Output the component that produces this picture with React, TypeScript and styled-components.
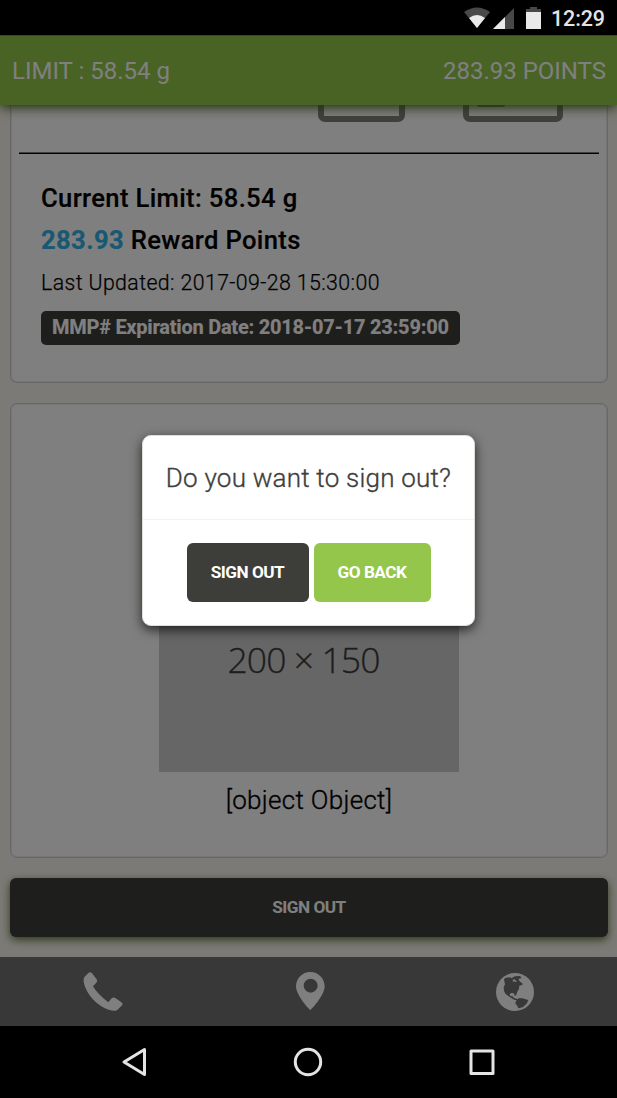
import React from "react";
import styled, { createGlobalStyle } from "styled-components";

const Global = createGlobalStyle`
  * { box-sizing: border-box; }
  body { margin: 0; background: #000; font-family: Roboto, "Liberation Sans", sans-serif; }
`;

const Phone = styled.div`
  display: flex;
  flex-direction: column;
  width: 617px;
  height: 1098px;
  overflow: hidden;
  background: #000;
`;

const StatusBar = styled.div`
  position: relative;
  z-index: 3;
  flex: none;
  height: 35px;
  display: flex;
  align-items: center;
  justify-content: flex-end;
  padding: 1px 12px 0 0;
  background: #000;
  color: #e4e4e4;
`;

const Clock = styled.span`
  margin-left: 10px;
  padding-top: 2px;
  font-size: 21.5px;
  font-weight: 500;
  letter-spacing: -0.1px;
  line-height: 30px;
`;

const Screen = styled.div`
  position: relative;
  flex: none;
  height: 991px;
  display: flex;
  flex-direction: column;
  background: #f7f4ec;
`;

const Header = styled.header`
  position: relative;
  z-index: 1;
  flex: none;
  height: 70px;
  padding: 0 11px 0 12px;
  display: flex;
  align-items: center;
  justify-content: space-between;
  background: #92c64a;
  border-top: 1px solid #6f9440;
  box-shadow: 0 3px 11px #4b6526;
  color: #fff;
  font-size: 24px;
  line-height: 30px;
`;

const Content = styled.main`
  flex: 1;
  min-height: 0;
  padding: 0 9px 0 10px;
  display: flex;
  flex-direction: column;
`;

const Card = styled.section<{ $height: number; $first?: boolean }>`
  flex: none;
  height: ${(p) => p.$height}px;
  margin-bottom: 20px;
  padding: 0 1px;
  background: #fff;
  border: 1px solid #cfcfcf;
  border-top-width: ${(p) => (p.$first ? 0 : 1)}px;
  border-radius: ${(p) => (p.$first ? "0 0 7px 7px" : "7px")};
  box-shadow: inset 0 0 0 1px #ececec;
`;

const BoxRow = styled.div`
  height: 47px;
  padding: 0 43px 0 0;
  display: flex;
  justify-content: flex-end;
  align-items: flex-start;
  gap: 58px;
`;

const Box = styled.div<{ $width: number }>`
  width: ${(p) => p.$width}px;
  height: 17px;
  border: 6px solid #80807c;
  border-top: 0;
  border-radius: 0 0 7px 7px;
`;

const BoxMark = styled.div`
  width: 28px;
  height: 2px;
  margin-left: 8px;
  background: #80807c;
  border-radius: 0 0 3px 3px;
`;

const Rule = styled.hr`
  height: 2px;
  margin: 0 7px;
  border: 0;
  border-top: 1px solid #808080;
  background: #000;
`;

const Details = styled.div`
  padding: 23px 29px 0;
  color: #000;
`;

const Strong = styled.div`
  font-size: 25.6px;
  font-weight: 500;
  letter-spacing: 0.36px;
  line-height: 42px;
  -webkit-text-stroke: 0.2px currentColor;
`;

const Points = styled.span`
  color: #33b0e4;
  font-weight: 700;
`;

const Updated = styled.div`
  padding-top: 1px;
  font-size: 21.3px;
  font-weight: 300;
  letter-spacing: 0.4px;
  line-height: 42px;
  -webkit-text-stroke: 0.25px currentColor;
`;

const Badge = styled.div`
  display: inline-block;
  height: 34px;
  margin-top: 7px;
  padding: 0 11px;
  border-radius: 5px;
  background: #3d3d3a;
  color: #fff;
  font-size: 20px;
  font-weight: 800;
  letter-spacing: -0.26px;
  line-height: 33px;
`;

const ImageCard = styled.div`
  padding-top: 143px;
  display: flex;
  flex-direction: column;
  align-items: center;
`;

const Placeholder = styled.div`
  width: 300px;
  height: 225px;
  padding: 0 11px 1px 0;
  display: flex;
  align-items: center;
  justify-content: center;
  background: #ccc;
  color: #3b3b3b;
  font-family: "Open Sans", "Noto Sans", sans-serif;
  font-weight: 300;
  font-size: 35.5px;
  letter-spacing: -0.9px;
  -webkit-text-stroke: 0.3px currentColor;
`;

const Caption = styled.div`
  margin-top: 8px;
  font-size: 26px;
  font-weight: 300;
  letter-spacing: 0.3px;
  line-height: 40px;
  color: #000;
  -webkit-text-stroke: 0.35px currentColor;
`;

const Button = styled.button<{ $tone: "dark" | "green"; $width: number; $raised?: boolean }>`
  flex: none;
  width: ${(p) => p.$width}px;
  height: 59px;
  padding: 0 0 2px;
  border: 0;
  border-radius: 6px;
  background: ${(p) => (p.$tone === "dark" ? "#3d3d39" : "#94c64c")};
  box-shadow: ${(p) => (p.$raised ? "0 3px 9px #5d7338" : "none")};
  color: #fff;
  font-family: inherit;
  font-size: 17.2px;
  font-weight: 700;
  letter-spacing: -0.5px;
`;

const TabBar = styled.nav`
  flex: none;
  height: 69px;
  display: grid;
  grid-template-columns: 206px 208px 202px;
  place-items: center;
  background: #707070;
  color: #fff;
`;

const Scrim = styled.div`
  position: absolute;
  inset: 0;
  z-index: 2;
  display: flex;
  align-items: center;
  justify-content: center;
  background: rgba(0, 0, 0, 0.5);
`;

const Dialog = styled.div`
  width: 333px;
  height: 191px;
  border: 1px solid #e0ddd8;
  border-radius: 9px;
  background: #fff;
  box-shadow: 0 4px 12px rgba(0, 0, 0, 0.7);
`;

const Question = styled.div`
  height: 84px;
  border-bottom: 1px solid #f2f3ec;
  color: #3e3e3c;
  font-size: 26px;
  font-weight: 300;
  letter-spacing: 0.22px;
  line-height: 84px;
  text-align: center;
  -webkit-text-stroke: 0.35px currentColor;
`;

const Actions = styled.div`
  padding: 23px 0 0 0;
  display: flex;
  justify-content: center;
  gap: 5px;
`;

const NavBar = styled.div`
  flex: none;
  height: 72px;
  display: grid;
  grid-template-columns: 221px 174px 174px;
  align-items: center;
`;

const NavKey = styled.div`
  display: flex;
  justify-content: flex-end;
`;

const WifiIcon = () => (
  <svg width="28" height="22" viewBox="0 0 28 22">
    <path d="M1 5Q14-4 27 5L14 21Z" fill="#484848" />
    <path d="M6 11Q14 5 22 11L14 21Z" fill="#e9e9e9" />
  </svg>
);

const SignalSvg = styled.svg`
  margin-left: 2px;
`;

const BatterySvg = styled.svg`
  margin-left: 12px;
`;

const SignalIcon = () => (
  <SignalSvg width="21" height="21" viewBox="0 0 21 21">
    <path d="M0 21L21 0V21Z" fill="#484848" />
    <path d="M0 21L12 9V21Z" fill="#e9e9e9" />
  </SignalSvg>
);

const BatteryIcon = () => (
  <BatterySvg width="15" height="22" viewBox="0 0 15 22">
    <path d="M4 0H11V2H15V6H0V2H4Z" fill="#484848" />
    <path d="M0 5H15V22H0Z" fill="#e9e9e9" />
  </BatterySvg>
);

const CallIcon = () => (
  <svg width="40" height="40" viewBox="0 0 120 120" fill="currentColor">
    <path d="M17 2Q23-2 27 4L41 22Q44 27 40 32L30 43Q43 66 76 91L86 79Q91 74 97 78L115 91Q121 95 117 100L103 114Q100 117 92 116C40 109 6 57 2 29Q1 19 5 14Z" />
  </svg>
);

const PinIcon = () => (
  <svg width="29" height="39" viewBox="0 0 87 117" fill="currentColor">
    <path
      fillRule="evenodd"
      d="M43 0C67 0 86 19 86 43C86 72 43 115 43 115S0 72 0 43C0 19 19 0 43 0ZM44 20A21 21 0 1 0 44 62A21 21 0 1 0 44 20Z"
    />
  </svg>
);

const GlobeIcon = () => (
  <svg width="38" height="38" viewBox="0 0 114 114">
    <circle cx="57" cy="57" r="57" fill="currentColor" />
    <path
      fill="#707070"
      d="M24 20L27 15L40 13L47 15L57 10L72 9L77 15L67 18L71 25L81 33L76 37L70 38L69 48L63 58L61 66L56 69L54 61L45 60L41 64L43 69L50 70L54 75L63 78L65 81L56 81L47 76L37 69L28 62L24 54L23 43L27 34Z"
    />
    <path fill="currentColor" d="M50 20L56 19L62 25L60 28L56 25L51 27Z" />
    <path fill="#707070" d="M60 83L67 76L79 76L97 81L92 92L80 103L67 106L63 97L58 92Z" />
  </svg>
);

export default function App() {
  return (
    <Phone>
      <Global />
      <StatusBar>
        <WifiIcon />
        <SignalIcon />
        <BatteryIcon />
        <Clock>12:29</Clock>
      </StatusBar>
      <Screen>
        <Header>
          <span>LIMIT : 58.54 g</span>
          <span>283.93 POINTS</span>
        </Header>
        <Content>
          <Card $height={278} $first>
            <BoxRow>
              <Box $width={87} />
              <Box $width={100}>
                <BoxMark />
              </Box>
            </BoxRow>
            <Rule />
            <Details>
              <Strong>Current Limit: 58.54 g</Strong>
              <Strong>
                <Points>283.93</Points> Reward Points
              </Strong>
              <Updated>Last Updated: 2017-09-28 15:30:00</Updated>
              <Badge>MMP# Expiration Date: 2018-07-17 23:59:00</Badge>
            </Details>
          </Card>
          <Card $height={455}>
            <ImageCard>
              <Placeholder>200 × 150</Placeholder>
              <Caption>[object Object]</Caption>
            </ImageCard>
          </Card>
          <Button $tone="dark" $width={598} $raised>
            SIGN OUT
          </Button>
        </Content>
        <TabBar>
          <CallIcon />
          <PinIcon />
          <GlobeIcon />
        </TabBar>
        <Scrim>
          <Dialog role="dialog">
            <Question>Do you want to sign out?</Question>
            <Actions>
              <Button $tone="dark" $width={122}>
                SIGN OUT
              </Button>
              <Button $tone="green" $width={117}>
                GO BACK
              </Button>
            </Actions>
          </Dialog>
        </Scrim>
      </Screen>
      <NavBar>
        <NavKey>
          <svg width="100" height="30" viewBox="0 0 100 30" fill="none" stroke="#e4e4e4" strokeWidth="3" strokeLinejoin="round">
            <path d="M3 15L23.5 2.5V27.5Z" />
          </svg>
        </NavKey>
        <NavKey>
          <svg width="102" height="30" viewBox="0 0 102 30" fill="none" stroke="#e4e4e4" strokeWidth="3">
            <circle cx="15" cy="15" r="12.7" />
          </svg>
        </NavKey>
        <NavKey>
          <svg width="102" height="30" viewBox="0 0 102 30" fill="none" stroke="#e4e4e4" strokeWidth="3" strokeLinejoin="round">
            <path d="M4 4H26V26.5H4Z" />
          </svg>
        </NavKey>
      </NavBar>
    </Phone>
  );
}
